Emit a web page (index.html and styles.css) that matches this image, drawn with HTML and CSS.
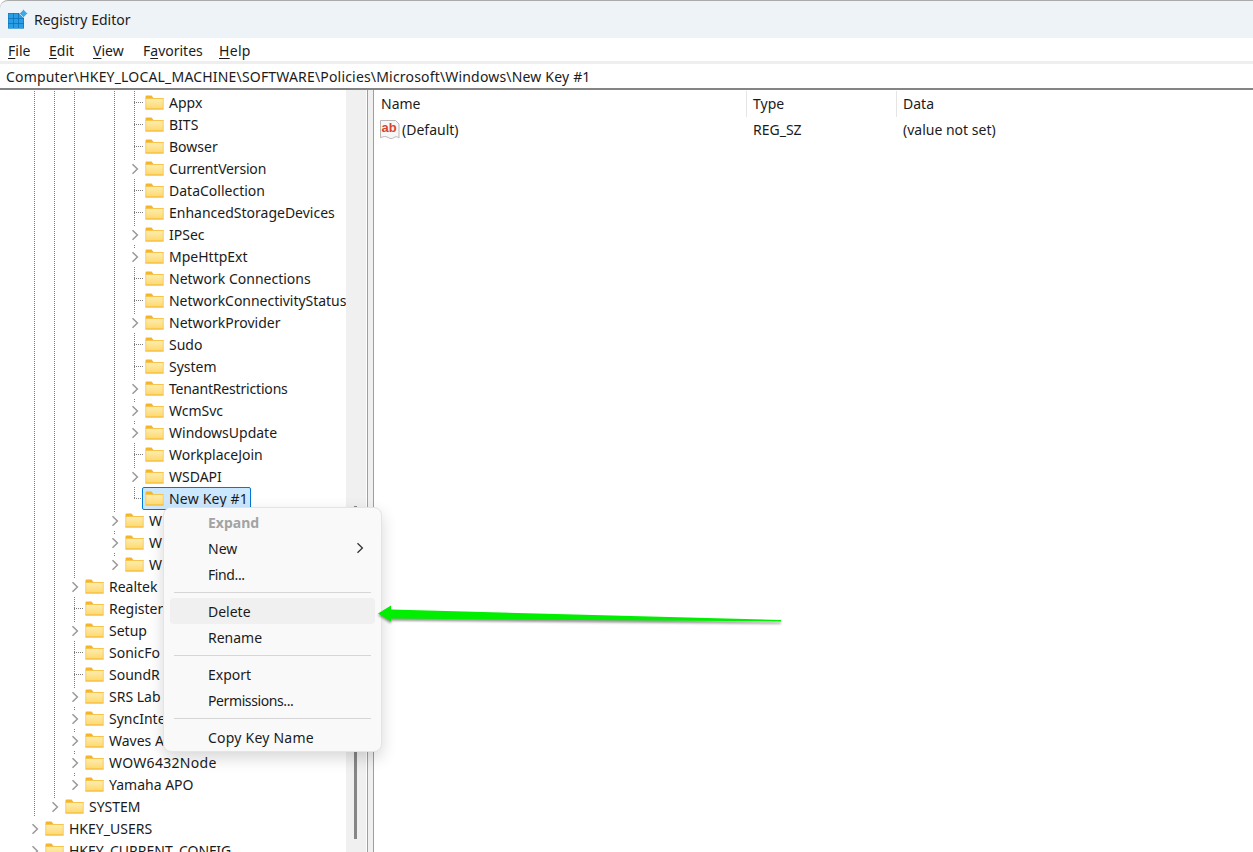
FILE: index.html
```html
<!DOCTYPE html>
<html lang="en">
<head>
<meta charset="utf-8">
<title>Registry Editor</title>
<link rel="stylesheet" href="styles.css">
</head>
<body>
<svg class="defs" width="0" height="0" aria-hidden="true">
  <defs>
    <linearGradient id="fbody" x1="0" y1="0" x2="0" y2="1">
      <stop offset="0" stop-color="#fdeeb8"/>
      <stop offset="1" stop-color="#ffd767"/>
    </linearGradient>
    <symbol id="folder" viewBox="0 0 19 15">
      <path d="M0.5 1.5a1 1 0 0 1 1-1h5l2 2.5h-8z" fill="#f6b428"/>
      <rect x="0.5" y="3" width="18" height="11.5" fill="url(#fbody)"/>
      <rect x="0.5" y="3" width="18" height="1" fill="#f9c44a"/>
      <rect x="0.5" y="13.5" width="18" height="1" fill="#f3b62f"/>
      <rect x="0.5" y="3" width="0.7" height="11" fill="#f6c452"/>
      <rect x="17.8" y="3" width="0.7" height="11" fill="#f6c452"/>
    </symbol>
    <symbol id="chev" viewBox="0 0 8 12">
      <path d="M1.5 1.200 6.400 6 1.500 10.800" fill="none" stroke="#999" stroke-width="1.500"/>
    </symbol>
  </defs>
</svg>

<div class="window">
  <header class="titlebar">
    <svg class="appicon" width="20" height="20" viewBox="0 0 20 20" aria-hidden="true">
      <rect x="0" y="4" width="16" height="15.500" fill="#0c6fb3"/>
      <g fill="#2a9ee4">
        <rect x="0.500" y="4.500" width="4.500" height="4.500"/><rect x="5.700" y="4.500" width="4.500" height="4.500"/><rect x="10.900" y="4.500" width="4.500" height="4.500"/>
        <rect x="0.500" y="9.700" width="4.500" height="4.500"/><rect x="5.700" y="9.700" width="4.500" height="4.500"/><rect x="10.900" y="9.700" width="4.500" height="4.500"/>
        <rect x="0.500" y="14.900" width="4.500" height="4.500"/><rect x="5.700" y="14.900" width="4.500" height="4.500"/><rect x="10.900" y="14.900" width="4.500" height="4.500"/>
      </g>
      <path d="M15.500 0.500 19.500 4.500 15.500 8.500 11.500 4.500z" fill="#3fa9e6" stroke="#bfe1f5" stroke-width="1"/>
    </svg>
    <span class="title">Registry Editor</span>
  </header>

  <nav class="menubar">
    <span class="menu m-file"><u>F</u>ile</span>
    <span class="menu m-edit"><u>E</u>dit</span>
    <span class="menu m-view"><u>V</u>iew</span>
    <span class="menu m-fav">F<u>a</u>vorites</span>
    <span class="menu m-help"><u>H</u>elp</span>
  </nav>

  <div class="address">Computer\HKEY_LOCAL_MACHINE\SOFTWARE\Policies\Microsoft\Windows\New Key #1</div>

  <main class="panes">
    <section class="tree">
      <div class="row"><i class="c g"></i><i class="c g"></i><i class="c g"></i><i class="c"></i><i class="c g"></i><i class="c tee"></i><svg class="fld"><use href="#folder"/></svg><span class="lbl">Appx</span></div>
      <div class="row"><i class="c g"></i><i class="c g"></i><i class="c g"></i><i class="c"></i><i class="c g"></i><i class="c tee"></i><svg class="fld"><use href="#folder"/></svg><span class="lbl">BITS</span></div>
      <div class="row"><i class="c g"></i><i class="c g"></i><i class="c g"></i><i class="c"></i><i class="c g"></i><i class="c tee"></i><svg class="fld"><use href="#folder"/></svg><span class="lbl">Bowser</span></div>
      <div class="row"><i class="c g"></i><i class="c g"></i><i class="c g"></i><i class="c"></i><i class="c g"></i><i class="c g"><svg class="chv"><use href="#chev"/></svg></i><svg class="fld"><use href="#folder"/></svg><span class="lbl lbl-snug">CurrentVersion</span></div>
      <div class="row"><i class="c g"></i><i class="c g"></i><i class="c g"></i><i class="c"></i><i class="c g"></i><i class="c tee"></i><svg class="fld"><use href="#folder"/></svg><span class="lbl">DataCollection</span></div>
      <div class="row"><i class="c g"></i><i class="c g"></i><i class="c g"></i><i class="c"></i><i class="c g"></i><i class="c tee"></i><svg class="fld"><use href="#folder"/></svg><span class="lbl">EnhancedStorageDevices</span></div>
      <div class="row"><i class="c g"></i><i class="c g"></i><i class="c g"></i><i class="c"></i><i class="c g"></i><i class="c g"><svg class="chv"><use href="#chev"/></svg></i><svg class="fld"><use href="#folder"/></svg><span class="lbl">IPSec</span></div>
      <div class="row"><i class="c g"></i><i class="c g"></i><i class="c g"></i><i class="c"></i><i class="c g"></i><i class="c g"><svg class="chv"><use href="#chev"/></svg></i><svg class="fld"><use href="#folder"/></svg><span class="lbl">MpeHttpExt</span></div>
      <div class="row"><i class="c g"></i><i class="c g"></i><i class="c g"></i><i class="c"></i><i class="c g"></i><i class="c tee"></i><svg class="fld"><use href="#folder"/></svg><span class="lbl">Network Connections</span></div>
      <div class="row"><i class="c g"></i><i class="c g"></i><i class="c g"></i><i class="c"></i><i class="c g"></i><i class="c tee"></i><svg class="fld"><use href="#folder"/></svg><span class="lbl lbl-tight">NetworkConnectivityStatus</span></div>
      <div class="row"><i class="c g"></i><i class="c g"></i><i class="c g"></i><i class="c"></i><i class="c g"></i><i class="c g"><svg class="chv"><use href="#chev"/></svg></i><svg class="fld"><use href="#folder"/></svg><span class="lbl">NetworkProvider</span></div>
      <div class="row"><i class="c g"></i><i class="c g"></i><i class="c g"></i><i class="c"></i><i class="c g"></i><i class="c tee"></i><svg class="fld"><use href="#folder"/></svg><span class="lbl">Sudo</span></div>
      <div class="row"><i class="c g"></i><i class="c g"></i><i class="c g"></i><i class="c"></i><i class="c g"></i><i class="c tee"></i><svg class="fld"><use href="#folder"/></svg><span class="lbl">System</span></div>
      <div class="row"><i class="c g"></i><i class="c g"></i><i class="c g"></i><i class="c"></i><i class="c g"></i><i class="c g"><svg class="chv"><use href="#chev"/></svg></i><svg class="fld"><use href="#folder"/></svg><span class="lbl lbl-snug">TenantRestrictions</span></div>
      <div class="row"><i class="c g"></i><i class="c g"></i><i class="c g"></i><i class="c"></i><i class="c g"></i><i class="c g"><svg class="chv"><use href="#chev"/></svg></i><svg class="fld"><use href="#folder"/></svg><span class="lbl">WcmSvc</span></div>
      <div class="row"><i class="c g"></i><i class="c g"></i><i class="c g"></i><i class="c"></i><i class="c g"></i><i class="c g"><svg class="chv"><use href="#chev"/></svg></i><svg class="fld"><use href="#folder"/></svg><span class="lbl">WindowsUpdate</span></div>
      <div class="row"><i class="c g"></i><i class="c g"></i><i class="c g"></i><i class="c"></i><i class="c g"></i><i class="c tee"></i><svg class="fld"><use href="#folder"/></svg><span class="lbl">WorkplaceJoin</span></div>
      <div class="row"><i class="c g"></i><i class="c g"></i><i class="c g"></i><i class="c"></i><i class="c g"></i><i class="c g"><svg class="chv"><use href="#chev"/></svg></i><svg class="fld"><use href="#folder"/></svg><span class="lbl">WSDAPI</span></div>
      <div class="row"><i class="c g"></i><i class="c g"></i><i class="c g"></i><i class="c"></i><i class="c g"></i><i class="c elbow"></i><span class="selected"><svg class="fld"><use href="#folder"/></svg><span class="lbl">New Key #1</span></span></div>
      <div class="row"><i class="c g"></i><i class="c g"></i><i class="c g"></i><i class="c"></i><i class="c g"><svg class="chv"><use href="#chev"/></svg></i><svg class="fld"><use href="#folder"/></svg><span class="lbl">W</span></div>
      <div class="row"><i class="c g"></i><i class="c g"></i><i class="c g"></i><i class="c"></i><i class="c g"><svg class="chv"><use href="#chev"/></svg></i><svg class="fld"><use href="#folder"/></svg><span class="lbl">W</span></div>
      <div class="row"><i class="c g"></i><i class="c g"></i><i class="c g"></i><i class="c"></i><i class="c top"><svg class="chv"><use href="#chev"/></svg></i><svg class="fld"><use href="#folder"/></svg><span class="lbl">W</span></div>
      <div class="row"><i class="c g"></i><i class="c g"></i><i class="c g"><svg class="chv"><use href="#chev"/></svg></i><svg class="fld"><use href="#folder"/></svg><span class="lbl">Realtek</span></div>
      <div class="row"><i class="c g"></i><i class="c g"></i><i class="c tee"></i><svg class="fld"><use href="#folder"/></svg><span class="lbl">Register</span></div>
      <div class="row"><i class="c g"></i><i class="c g"></i><i class="c g"><svg class="chv"><use href="#chev"/></svg></i><svg class="fld"><use href="#folder"/></svg><span class="lbl">Setup</span></div>
      <div class="row"><i class="c g"></i><i class="c g"></i><i class="c tee"></i><svg class="fld"><use href="#folder"/></svg><span class="lbl">SonicFo</span></div>
      <div class="row"><i class="c g"></i><i class="c g"></i><i class="c tee"></i><svg class="fld"><use href="#folder"/></svg><span class="lbl">SoundR</span></div>
      <div class="row"><i class="c g"></i><i class="c g"></i><i class="c g"><svg class="chv"><use href="#chev"/></svg></i><svg class="fld"><use href="#folder"/></svg><span class="lbl">SRS Lab</span></div>
      <div class="row"><i class="c g"></i><i class="c g"></i><i class="c g"><svg class="chv"><use href="#chev"/></svg></i><svg class="fld"><use href="#folder"/></svg><span class="lbl">SyncInte</span></div>
      <div class="row"><i class="c g"></i><i class="c g"></i><i class="c g"><svg class="chv"><use href="#chev"/></svg></i><svg class="fld"><use href="#folder"/></svg><span class="lbl">Waves A</span></div>
      <div class="row"><i class="c g"></i><i class="c g"></i><i class="c g"><svg class="chv"><use href="#chev"/></svg></i><svg class="fld"><use href="#folder"/></svg><span class="lbl lbl-wide">WOW6432Node</span></div>
      <div class="row"><i class="c g"></i><i class="c g"></i><i class="c top"><svg class="chv"><use href="#chev"/></svg></i><svg class="fld"><use href="#folder"/></svg><span class="lbl">Yamaha APO</span></div>
      <div class="row"><i class="c g"></i><i class="c top"><svg class="chv"><use href="#chev"/></svg></i><svg class="fld"><use href="#folder"/></svg><span class="lbl">SYSTEM</span></div>
      <div class="row"><i class="c"><svg class="chv"><use href="#chev"/></svg></i><svg class="fld"><use href="#folder"/></svg><span class="lbl">HKEY_USERS</span></div>
      <div class="row"><i class="c"><svg class="chv"><use href="#chev"/></svg></i><svg class="fld"><use href="#folder"/></svg><span class="lbl">HKEY_CURRENT_CONFIG</span></div>
    </section>

    <div class="scrollbar"><div class="thumb"></div></div>
    <div class="splitter"></div>

    <section class="list">
      <div class="list-head">
        <span class="col col-name">Name</span>
        <span class="col col-type">Type</span>
        <span class="col col-data">Data</span>
      </div>
      <div class="list-row">
        <span class="col col-name default-cell">
          <svg class="abicon" width="20" height="19" viewBox="0 0 20 19" aria-hidden="true">
            <path d="M0.500 0.500H15.500L19 4V18c-2-1.600-3.400-1.600-5.200-.4-2 1.300-3.400 1.300-5.400 0-2.400-1.500-5.500-1.300-7.900.2z" fill="#f7f7f7" stroke="#bbb7b4"/>
            <text x="1.500" y="12" class="abtext">ab</text>
          </svg>(Default)
        </span>
        <span class="col col-type">REG_SZ</span>
        <span class="col col-data">(value not set)</span>
      </div>
    </section>
  </main>
</div>

<div class="ctx">
  <div class="item disabled">Expand</div>
  <div class="item has-sub">New<svg class="sub" width="8" height="12" viewBox="0 0 8 12" aria-hidden="true"><path d="M1.500 1.200 6.400 6 1.500 10.800" fill="none" stroke="#333" stroke-width="1.300"/></svg></div>
  <div class="item item-snug">Find...</div>
  <div class="sep"></div>
  <div class="item hover">Delete</div>
  <div class="item">Rename</div>
  <div class="sep"></div>
  <div class="item">Export</div>
  <div class="item item-snug">Permissions...</div>
  <div class="sep"></div>
  <div class="item item-wide">Copy Key Name</div>
</div>

<svg class="arrow" width="420" height="30" viewBox="0 0 420 30" aria-hidden="true">
  <defs><filter id="ash" x="-5%" y="-50%" width="110%" height="200%"><feGaussianBlur stdDeviation="0.900"/></filter></defs>
  <path d="M8 13.500 21 6V10L411 20.500V22L21 19V22z" transform="translate(0 1.800)" fill="#555" opacity=".6" filter="url(#ash)"/>
  <path d="M8 13.500 21 5.500V9.500L411 20V21.500L21 18.500V21.500z" fill="#00ee00"/>
</svg>
</body>
</html>
```
FILE: styles.css
```css
* { box-sizing: border-box; }
html, body { margin: 0; height: 100%; overflow: hidden; background: #fff; }
body {
  font-family: "Noto Sans", "Open Sans", sans-serif;
  font-size: 14px;
  color: #1b1b1b;
  position: relative;
}
.defs { display: block; height: 0; }

.window { display: flex; flex-direction: column; height: 852px; }

.titlebar {
  height: 38px;
  flex: none;
  display: flex;
  align-items: center;
  padding-left: 8px;
  background: #eef3f8;
  border-top: 1px solid #aaa;
  border-top-left-radius: 8px;
}
.appicon { margin: 0 6px 2px 0; flex: none; }
.title { font-size: 14px; }

.menubar {
  height: 23px;
  flex: none;
  display: flex;
  align-items: center;
  padding-top: 2px;
  background: #fff;
}
.menu { flex: none; }
.m-file { margin-left: 8px; width: 41px; }
.m-edit { width: 44px; }
.m-view { width: 50px; }
.m-fav { width: 76px; }
.m-help { width: 40px; letter-spacing: .3px; }
.menu u { text-underline-offset: 2px; }

.address {
  height: 27px;
  flex: none;
  padding-left: 6px;
  display: flex;
  align-items: center;
  border-top: 3px solid #eee;
  white-space: nowrap;
  letter-spacing: .18px;
}

.panes {
  flex: 1;
  min-height: 0;
  display: flex;
  border-top: 2px solid #848484;
  overflow: hidden;
}

.tree {
  width: 346px;
  flex: none;
  padding: 1px 0 0 24px;
  overflow: hidden;
}
.row { display: flex; align-items: center; height: 22px; white-space: nowrap; }
.c {
  display: flex;
  align-items: center;
  justify-content: center;
  width: 20px;
  height: 22px;
  flex: none;
  background-repeat: no-repeat;
}
.g {
  background-image: repeating-linear-gradient(#7c7c7c 0 1px, transparent 1px 2px);
  background-size: 1px 100%;
  background-position: 10px 0;
}
.tee {
  background-image:
    repeating-linear-gradient(#7c7c7c 0 1px, transparent 1px 2px),
    repeating-linear-gradient(90deg, #7c7c7c 0 1px, transparent 1px 2px);
  background-size: 1px 100%, 10px 1px;
  background-position: 10px 0, 10px 11px;
}
.elbow {
  background-image:
    repeating-linear-gradient(#7c7c7c 0 1px, transparent 1px 2px),
    repeating-linear-gradient(90deg, #7c7c7c 0 1px, transparent 1px 2px);
  background-size: 1px 11px, 10px 1px;
  background-position: 10px 0, 10px 11px;
}
.top {
  background-image: repeating-linear-gradient(#7c7c7c 0 1px, transparent 1px 2px);
  background-size: 1px 4px;
  background-position: 10px 0;
}
.chv {
  width: 8px;
  height: 12px;
  background: #fff;
  box-shadow: 0 0 0 3px #fff;
  margin: 2px 0 0 1px;
}
.fld { width: 19px; height: 15px; flex: none; margin: 0 5px 0 1px; }
.lbl { flex: none; }
.lbl-wide { letter-spacing: .3px; }
.lbl-tight { letter-spacing: -.03px; }
.lbl-snug { letter-spacing: -.18px; }
.selected {
  display: flex;
  align-items: center;
  height: 23px;
  margin-left: -2px;
  padding: 0 2px 0 2px;
  background: #cce8ff;
  border: 1px solid #0078d7;
  border-radius: 2px;
}
.selected .fld { margin-left: 0; }
.selected .lbl { letter-spacing: .2px; }

.scrollbar {
  width: 20px;
  flex: none;
  background: #f0f0f0;
  padding: 416px 0 0 8px;
}
.thumb { width: 3px; height: 333px; background: #868686; }

.splitter {
  width: 7px;
  flex: none;
  background: #f0f0f0;
  border-left: 1px solid #9c9cab;
  border-right: 1px solid #9c9cab;
  margin-left: 1px;
}

.list { flex: 1; min-width: 0; padding-top: 1px; }
.list-head, .list-row { display: flex; }
.list-head { height: 26px; align-items: center; }
.list-row { height: 25px; align-items: center; }
.col { flex: none; padding-left: 7px; white-space: nowrap; }
.col-name { width: 372px; padding-left: 7px; }
.col-type { width: 150px; }
.col-data { flex: 1; }
.list-head .col { height: 26px; line-height: 26px; }
.list-head .col-type, .list-head .col-data { border-left: 1px solid #e5e5e5; padding-left: 6px; }
.default-cell { display: flex; align-items: center; padding-left: 6px; }
.abicon { margin-right: 2px; flex: none; }
.abtext { font-family: "Liberation Sans", sans-serif; font-size: 13px; font-weight: 700; fill: #d8462a; }

.ctx {
  position: absolute;
  left: 163px;
  top: 507px;
  width: 219px;
  height: 245px;
  padding: 1px 6px 0;
  background: #f9f9f9;
  border: 1px solid #e4e4e4;
  border-radius: 8px;
  box-shadow: 0 6px 16px rgba(0,0,0,.16);
}
.item {
  height: 26px;
  display: flex;
  align-items: center;
  justify-content: space-between;
  padding: 0 11px 0 38px;
  border-radius: 4px;
}
.item-snug { letter-spacing: -.4px; }
.item-wide { letter-spacing: .22px; }
.item.disabled { color: #a3a3a3; font-weight: 700; }
.item.hover { background: #f0f0f0; padding-top: 1px; }
.sep { height: 1px; margin: 5px 4px; background: #d6d6d6; }
.sub { flex: none; }

.arrow { position: absolute; left: 370px; top: 600px; }
```
